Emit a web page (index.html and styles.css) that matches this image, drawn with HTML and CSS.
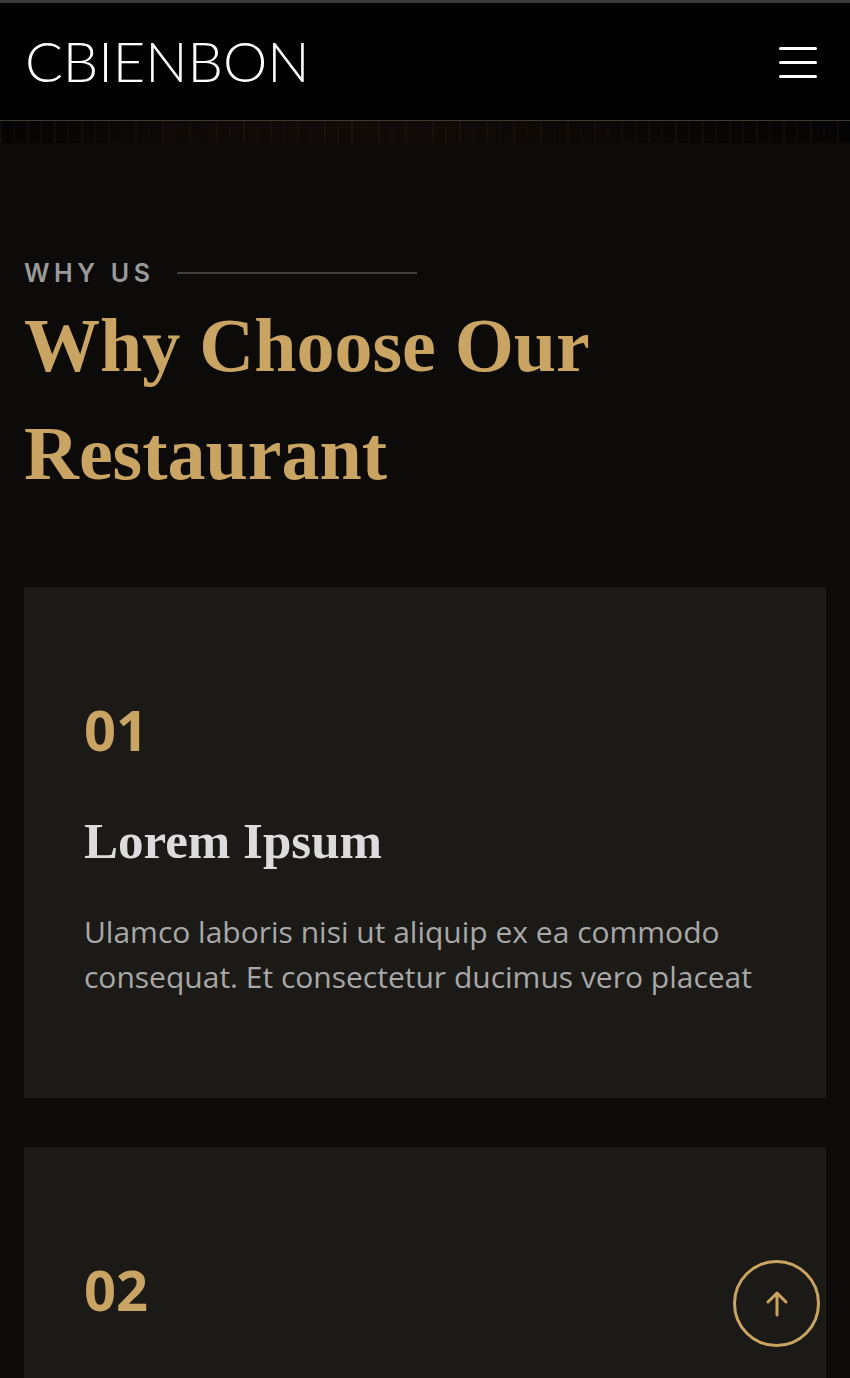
FILE: index.html
```html
<!DOCTYPE html>
<html lang="en">
<head>
<meta charset="utf-8">
<title>CBIENBON</title>
<link rel="stylesheet" href="styles.css">
</head>
<body>
<div class="topbar"></div>
<header class="header">
  <div class="logo">CBIENBON</div>
  <button class="burger" aria-label="Menu">
    <span></span><span></span><span></span>
  </button>
</header>
<div class="strip"></div>
<main class="why">
  <div class="eyebrow">
    <span class="eyebrow-text">WHY US</span>
    <span class="eyebrow-line"></span>
  </div>
  <h1 class="title">Why Choose Our Restaurant</h1>
  <div class="cards">
    <article class="card">
      <div class="num">01</div>
      <h2 class="card-title">Lorem Ipsum</h2>
      <p class="card-text">Ulamco laboris nisi ut aliquip ex ea commodo consequat. Et consectetur ducimus vero placeat</p>
    </article>
    <article class="card">
      <div class="num">02</div>
      <h2 class="card-title">Lorem Ipsum</h2>
      <p class="card-text">Ulamco laboris nisi ut aliquip ex ea commodo consequat. Et consectetur ducimus vero placeat</p>
    </article>
  </div>
</main>
<a class="to-top" href="#" aria-label="Back to top">
  <svg width="30" height="30" viewBox="0 0 30 30" fill="none" stroke="#c9a463" stroke-width="3" stroke-linecap="round" stroke-linejoin="round">
    <path d="M15 26V5M6 13l9-9 9 9"/>
  </svg>
</a>
</body>
</html>
```
FILE: styles.css
```css
html, body {
  margin: 0;
  padding: 0;
  background: #0c0b0a;
  overflow: hidden;
  height: 1378px;
}
.topbar {
  height: 3px;
  background: #3a3a3a;
}
.header {
  height: 117px;
  background: #000;
  border-bottom: 1px solid #3d3c32;
  display: flex;
  align-items: center;
  justify-content: space-between;
  padding: 0 33px 0 25px;
}
.logo {
  font-family: "Lato", "Liberation Sans", sans-serif;
  font-weight: 300;
  font-size: 56px;
  color: #fff;
  letter-spacing: 0px;
  line-height: 1;
  margin-top: -2px;
}
.burger {
  background: none;
  border: 0;
  padding: 0;
  width: 38px;
  display: flex;
  flex-direction: column;
  gap: 11px;
  margin-top: 2px;
}
.burger span {
  display: block;
  height: 3px;
  background: #fff;
  border-radius: 2px;
}
.strip {
  height: 22px;
  background:
    repeating-linear-gradient(90deg, rgba(50,34,22,0.25) 0 2px, transparent 2px 13px, rgba(35,25,16,0.2) 13px 15px, transparent 15px 27px),
    linear-gradient(90deg, #050404 0%, #0d0907 20%, #100b08 45%, #0b0806 70%, #050404 100%);
}
.why {
  padding: 114px 24px 0;
}
.eyebrow {
  display: flex;
  align-items: center;
  gap: 22px;
}
.eyebrow-text {
  font-family: "Inter", "Liberation Sans", sans-serif;
  font-weight: 600;
  font-size: 25px;
  letter-spacing: 4.6px;
  color: #9a9a9a;
  line-height: 32px;
}
.eyebrow-line {
  width: 240px;
  height: 2px;
  background: #3f3f3f;
}
.title {
  font-family: "Liberation Serif", "DejaVu Serif", serif;
  font-weight: 700;
  font-size: 76px;
  line-height: 108px;
  color: #c9a463;
  margin: 2px 0 0;
  max-width: 620px;
}
.cards {
  margin-top: 80px;
  display: flex;
  flex-direction: column;
  gap: 49px;
}
.card {
  background: #1b1a17;
  padding: 106px 60px 99px;
}
.num {
  font-family: "Open Sans", "Liberation Sans", sans-serif;
  font-weight: 700;
  font-size: 56px;
  line-height: 72px;
  color: #c9a463;
}
.card-title {
  font-family: "Liberation Serif", "DejaVu Serif", serif;
  font-weight: 700;
  font-size: 51px;
  line-height: 64px;
  color: #dcdcdc;
  margin: 44px 0 0;
}
.card-text {
  font-family: "Open Sans", "Liberation Sans", sans-serif;
  font-size: 30px;
  line-height: 45px;
  color: #a8a8a8;
  margin: 36px 0 0;
}
.to-top {
  position: fixed;
  left: 733px;
  top: 1260px;
  width: 81px;
  height: 81px;
  border: 3px solid #c9a463;
  border-radius: 50%;
  display: flex;
  align-items: center;
  justify-content: center;
}
```
